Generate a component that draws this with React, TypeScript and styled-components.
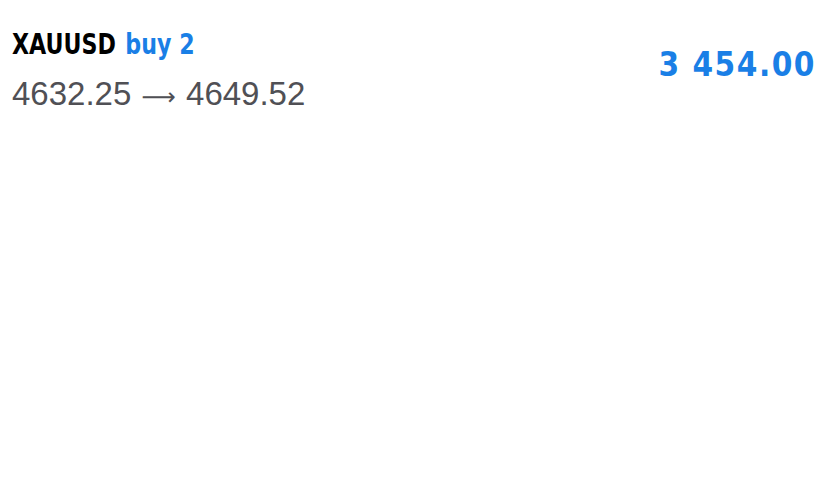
import styled, { createGlobalStyle } from "styled-components";

const GlobalStyle = createGlobalStyle`
    html, body {
        margin: 0;
        padding: 0;
        background: #ffffff;
    }
`;

const condensed = `"DejaVu Sans Condensed", "Liberation Sans Narrow", "Liberation Sans", sans-serif`;
const accent = "#1a7fe6";

const Page = styled.div`
    width: 828px;
    height: 479px;
    background: #ffffff;
    box-sizing: border-box;
    padding: 28px 13px 0 12px;
    overflow: hidden;
`;

const Row = styled.div`
    display: flex;
    justify-content: space-between;
    align-items: flex-start;
`;

const Info = styled.div`
    display: flex;
    flex-direction: column;
    gap: 13px;
`;

const Title = styled.div`
    font-family: ${condensed};
    font-weight: 700;
    font-size: 28px;
    line-height: 34px;
    color: #000000;
    white-space: nowrap;
    transform: scaleX(0.88);
    transform-origin: left center;
`;

const Side = styled.span`
    color: ${accent};
    margin-left: 2px;
`;

const Prices = styled.div`
    font-family: "Liberation Sans", Arial, sans-serif;
    font-size: 33px;
    line-height: 37px;
    color: #505055;
    white-space: nowrap;
`;

const Arrow = styled.span`
    font-family: "DejaVu Sans", sans-serif;
    font-size: 24px;
    margin: 0 1px;
`;

const Profit = styled.div`
    font-family: ${condensed};
    font-weight: 700;
    font-size: 33px;
    line-height: 40px;
    letter-spacing: 1.5px;
    color: ${accent};
    margin-top: 17px;
    margin-right: -1px;
    white-space: nowrap;
`;

export default function App() {
    return (
        <Page>
            <GlobalStyle />
            <Row>
                <Info>
                    <Title>
                        XAUUSD <Side>buy 2</Side>
                    </Title>
                    <Prices>
                        4632.25 <Arrow>⟶</Arrow> 4649.52
                    </Prices>
                </Info>
                <Profit>3 454.00</Profit>
            </Row>
        </Page>
    );
}
